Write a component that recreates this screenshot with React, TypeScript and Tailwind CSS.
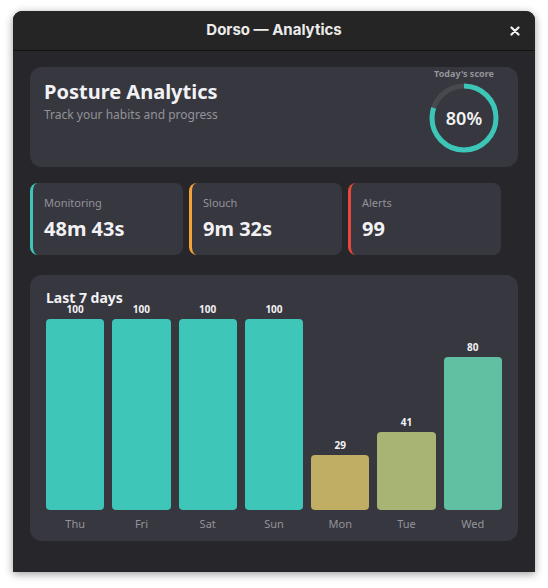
import React from 'react';

// Dorso analytics window: header with score ring, three stat cards, 7-day bar chart.

const FONT_UI = { fontFamily: '"Noto Sans", "Open Sans", sans-serif' };
const FONT_TITLE = { fontFamily: 'Inter, "Noto Sans", sans-serif' };

const STATS = [
  { label: 'Monitoring', value: '48m 43s', border: 'border-[#3ec6b9]' },
  { label: 'Slouch', value: '9m 32s', border: 'border-[#f2a33a]' },
  { label: 'Alerts', value: '99', border: 'border-[#e5493a]' },
];

const DAYS = [
  { day: 'Thu', value: 100, color: '#3ec6b9' },
  { day: 'Fri', value: 100, color: '#3ec6b9' },
  { day: 'Sat', value: 100, color: '#3ec6b9' },
  { day: 'Sun', value: 100, color: '#3ec6b9' },
  { day: 'Mon', value: 29, color: '#bfae63' },
  { day: 'Tue', value: 41, color: '#a8b474' },
  { day: 'Wed', value: 80, color: '#60c0a1' },
];

const BAR_MAX = 191;

function ScoreRing({ pct }: { pct: number }) {
  const r = 32;
  const c = 2 * Math.PI * r;
  return (
    <svg width="70" height="70" viewBox="0 0 70 70">
      <circle cx="35" cy="35" r={r} fill="none" stroke="#48484e" strokeWidth="5" />
      <circle
        cx="35"
        cy="35"
        r={r}
        fill="none"
        stroke="#3cc6b8"
        strokeWidth="5"
        strokeDasharray={`${(c * pct) / 100} ${c}`}
        transform="rotate(-90 35 35)"
      />
      <text
        x="35"
        y="41.5"
        textAnchor="middle"
        fill="#f2f2f4"
        fontSize="18"
        fontWeight="600"
        style={FONT_UI}
      >
        {pct}%
      </text>
    </svg>
  );
}

export default function App() {
  return (
    <div className="min-h-[588px] w-[548px] bg-white pt-[11px] pl-[13px]">
      <div
        className="flex h-[561px] w-[522px] flex-col overflow-hidden rounded-t-[9px] bg-[#27272b] shadow-[0_2px_8px_rgba(0,0,0,0.4)]"
        style={FONT_UI}
      >
        {/* Title bar */}
        <div className="relative flex h-[40px] items-center justify-center border-b border-[#121212] bg-[#252525]">
          <span className="text-[15px] font-bold text-[#ececec]" style={FONT_TITLE}>
            Dorso — Analytics
          </span>
          <button type="button" className="absolute right-[15px] top-[15px]" aria-label="Close">
            <svg width="10" height="10" viewBox="0 0 10 10">
              <path d="M1.5 1.5 L8.5 8.5 M8.5 1.5 L1.5 8.5" stroke="#f2f2f2" strokeWidth="2.2" strokeLinecap="round" />
            </svg>
          </button>
        </div>

        <div className="flex flex-col px-[17px] pt-[16px]">
          {/* Header */}
          <div className="flex h-[100px] items-start justify-between rounded-[12px] bg-[#37373f] pl-[14px] pr-[19px]">
            <div className="pt-[11px]">
              <div className="text-[20px] font-bold leading-[28px] text-[#f2f2f4]">Posture Analytics</div>
              <div className="text-[12px] leading-[18px] text-[#93939a]">Track your habits and progress</div>
            </div>
            <div className="flex flex-col items-center pt-[1px]">
              <div className="text-[9px] font-bold leading-[12px] text-[#94949a]">Today&apos;s score</div>
              <div className="mt-[3px]">
                <ScoreRing pct={80} />
              </div>
            </div>
          </div>

          {/* Stat cards */}
          <div className="mt-[16px] flex gap-[6px]">
            {STATS.map((s) => (
              <div
                key={s.label}
                className={`h-[72px] w-[153px] rounded-[8px] border-l-[3px] bg-[#37373f] pl-[11px] pt-[12px] ${s.border}`}
              >
                <div className="text-[11px] leading-[16px] text-[#93939a]">{s.label}</div>
                <div className="mt-[5px] text-[20px] font-bold leading-[26px] text-[#f2f2f4]">{s.value}</div>
              </div>
            ))}
          </div>

          {/* Chart */}
          <div className="mt-[20px] rounded-[12px] bg-[#37373f] px-[16px] pb-[9px] pt-[17px]">
            <div className="text-[14px] font-bold leading-[12px] text-[#f2f2f4]">Last 7 days</div>
            <div className="flex items-end gap-[8px]">
              {DAYS.map((d) => (
                <div key={d.day} className="flex flex-1 flex-col items-center">
                  <div className="mb-[5px] text-[10px] font-bold leading-[10px] text-[#f2f2f4]">{d.value}</div>
                  <div
                    className="w-full rounded-[4px]"
                    style={{ height: Math.round((BAR_MAX * d.value) / 100), backgroundColor: d.color }}
                  />
                  <div className="mt-[6px] text-[11px] leading-[16px] text-[#93939a]">{d.day}</div>
                </div>
              ))}
            </div>
          </div>
        </div>
      </div>
    </div>
  );
}
